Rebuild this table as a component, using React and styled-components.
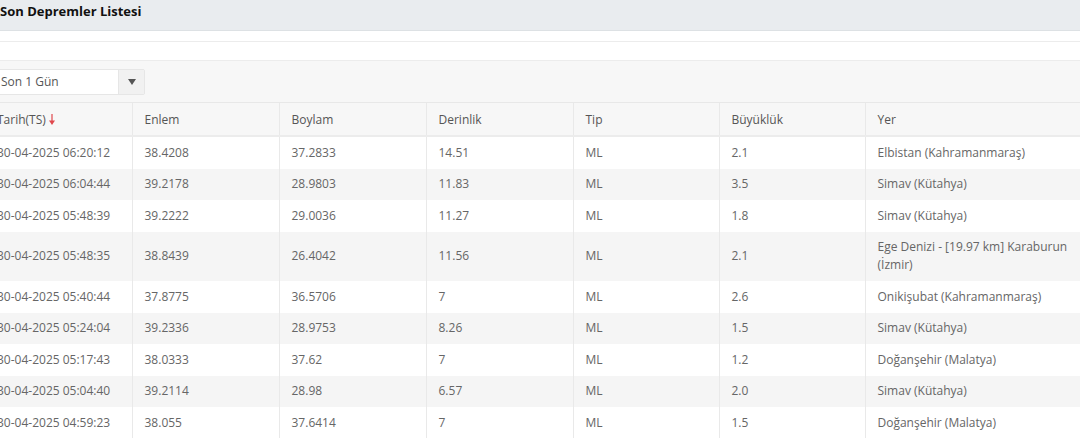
import styled, { createGlobalStyle } from "styled-components";

const GlobalStyle = createGlobalStyle`
    body {
        margin: 0;
        background: #fff;
        font-family: 'Open Sans', 'Noto Sans', sans-serif;
        overflow: hidden;
    }
`

const Page = styled.div`
    width: 1100px;
    margin-left: -15px;
`

const TitleBar = styled.div`
    height: 30px;
    padding: 0 15px;
    background: #e9ecef;
    border-bottom: 1px solid #dde1e4;
    font-weight: 700;
    font-size: 13px;
    line-height: 23px;
    color: #111;
`

const Spacer = styled.div`
    height: 10px;
    border-bottom: 1px solid #ececec;
`

const Blank = styled.div`
    height: 18px;
    border-bottom: 1px solid #ececec;
`

const FilterBar = styled.div`
    background: #f7f7f7;
    padding: 8px 0 7px 12px;
    border-bottom: 1px solid #e8e8e8;
`

const Select = styled.div`
    display: flex;
    width: 148px;
    height: 26px;
    border: 1px solid #e6e6e6;
    border-radius: 2px;
    box-sizing: border-box;
    font-size: 12px;
    color: #555;
    .value {
        flex: 1;
        background: #fff;
        padding-left: 3px;
        line-height: 24px;
    }
    .arrow {
        width: 25px;
        background: #f1f1f1;
        border-left: 1px solid #e6e6e6;
        display: flex;
        align-items: center;
        justify-content: center;
    }
`

const Table = styled.table`
    width: 1100px;
    table-layout: fixed;
    border-collapse: collapse;
    font-size: 12px;
    color: #666;
    th, td {
        padding: 6.75px 12px;
        line-height: 18px;
        text-align: left;
        vertical-align: middle;
        border-right: 1px solid #e9e9e9;
    }
    th {
        font-weight: 400;
        color: #555;
        background: #f7f7f7;
        padding: 8px 12px 6px;
        border-bottom: 2px solid #ececec;
    }
    tbody tr:nth-child(even) td {
        background: #f5f5f5;
    }
`

const Col = styled.col`
    width: ${p => p.$w ? `${p.$w}px` : "auto"};
`

const SortArrow = styled.svg`
    margin-left: 3px;
    vertical-align: -1px;
`

const widths = [147, 147, 147, 147, 146, 146, null]

const rows = [
    ["30-04-2025 06:20:12", "38.4208", "37.2833", "14.51", "ML", "2.1", "Elbistan (Kahramanmaraş)"],
    ["30-04-2025 06:04:44", "39.2178", "28.9803", "11.83", "ML", "3.5", "Simav (Kütahya)"],
    ["30-04-2025 05:48:39", "39.2222", "29.0036", "11.27", "ML", "1.8", "Simav (Kütahya)"],
    ["30-04-2025 05:48:35", "38.8439", "26.4042", "11.56", "ML", "2.1", "Ege Denizi - [19.97 km] Karaburun (İzmir)"],
    ["30-04-2025 05:40:44", "37.8775", "36.5706", "7", "ML", "2.6", "Onikişubat (Kahramanmaraş)"],
    ["30-04-2025 05:24:04", "39.2336", "28.9753", "8.26", "ML", "1.5", "Simav (Kütahya)"],
    ["30-04-2025 05:17:43", "38.0333", "37.62", "7", "ML", "1.2", "Doğanşehir (Malatya)"],
    ["30-04-2025 05:04:40", "39.2114", "28.98", "6.57", "ML", "2.0", "Simav (Kütahya)"],
    ["30-04-2025 04:59:23", "38.055", "37.6414", "7", "ML", "1.5", "Doğanşehir (Malatya)"],
]

function App() {
    return (
        <Page>
            <GlobalStyle />
            <TitleBar>Son Depremler Listesi</TitleBar>
            <Spacer />
            <Blank />
            <FilterBar>
                <Select>
                    <div className="value">Son 1 Gün</div>
                    <div className="arrow">
                        <svg width="8" height="6" viewBox="0 0 8 6"><path d="M0 0h8L4 6z" fill="#555" /></svg>
                    </div>
                </Select>
            </FilterBar>
            <Table>
                <colgroup>
                    {widths.map((w, i) => <Col key={i} $w={w} />)}
                </colgroup>
                <thead>
                    <tr>
                        <th>
                            Tarih(TS)
                            <SortArrow width="6" height="11" viewBox="0 0 6 11">
                                <path d="M3 0v8" stroke="#e0474c" strokeWidth="1.2" />
                                <path d="M0 6.5h6L3 11z" fill="#e0474c" />
                            </SortArrow>
                        </th>
                        <th>Enlem</th>
                        <th>Boylam</th>
                        <th>Derinlik</th>
                        <th>Tip</th>
                        <th>Büyüklük</th>
                        <th>Yer</th>
                    </tr>
                </thead>
                <tbody>
                    {rows.map((r) => (
                        <tr key={r[0]}>
                            {r.map((c, i) => <td key={i}>{c}</td>)}
                        </tr>
                    ))}
                </tbody>
            </Table>
        </Page>
    )
}

export default App;
